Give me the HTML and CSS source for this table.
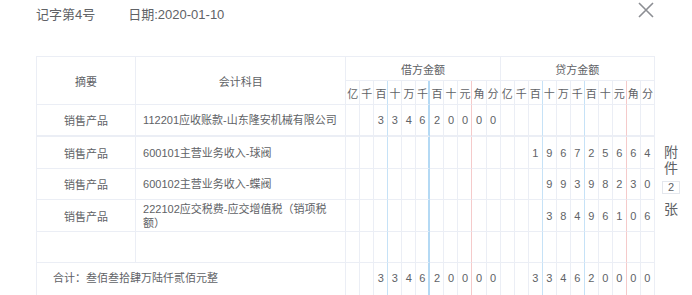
FILE: index.html
```html
<!DOCTYPE html>
<html lang="zh-CN">
<head>
<meta charset="utf-8">
<title>记账凭证</title>
<link rel="stylesheet" href="styles.css">
</head>
<body>
<div class="voucher">
  <div class="head">
    <span class="no">记字第4号</span>
    <span class="date">日期:2020-01-10</span>
  </div>
  <button class="close" aria-label="关闭">
    <svg viewBox="0 0 18 18" width="18" height="18"><path d="M2 2 L16 16 M16 2 L2 16" stroke="#8c8e93" stroke-width="1.6" fill="none"/></svg>
  </button>
  <div class="body">
    <table class="grid">
      <colgroup>
        <col class="c-sum"><col class="c-sub">
        <col class="c-d"><col class="c-d"><col class="c-d"><col class="c-d"><col class="c-d"><col class="c-d"><col class="c-d"><col class="c-d"><col class="c-d"><col class="c-d"><col class="c-d">
        <col class="c-d"><col class="c-d"><col class="c-d"><col class="c-d"><col class="c-d"><col class="c-d"><col class="c-d"><col class="c-d"><col class="c-d"><col class="c-d"><col class="c-d">
      </colgroup>
      <thead>
        <tr class="h1">
          <th rowspan="2" class="lbl">摘要</th>
          <th rowspan="2" class="lbl">会计科目</th>
          <th colspan="11" class="side debit">借方金额</th>
          <th colspan="11" class="side">贷方金额</th>
        </tr>
        <tr class="h2 dig">
          <th>亿</th><th>千</th><th>百</th><th>十</th><th>万</th><th>千</th><th>百</th><th>十</th><th>元</th><th>角</th><th>分</th>
          <th>亿</th><th>千</th><th>百</th><th>十</th><th>万</th><th>千</th><th>百</th><th>十</th><th>元</th><th>角</th><th>分</th>
        </tr>
      </thead>
      <tbody>
        <tr class="r first dig">
          <td class="sum">销售产品</td><td class="sub">112201应收账款-山东隆安机械有限公司</td>
          <td></td><td></td><td>3</td><td>3</td><td>4</td><td>6</td><td>2</td><td>0</td><td>0</td><td>0</td><td>0</td>
          <td></td><td></td><td></td><td></td><td></td><td></td><td></td><td></td><td></td><td></td><td></td>
        </tr>
        <tr class="r r32 dig">
          <td class="sum">销售产品</td><td class="sub">600101主营业务收入-球阀</td>
          <td></td><td></td><td></td><td></td><td></td><td></td><td></td><td></td><td></td><td></td><td></td>
          <td></td><td></td><td>1</td><td>9</td><td>6</td><td>7</td><td>2</td><td>5</td><td>6</td><td>6</td><td>4</td>
        </tr>
        <tr class="r r31 dig">
          <td class="sum">销售产品</td><td class="sub">600102主营业务收入-蝶阀</td>
          <td></td><td></td><td></td><td></td><td></td><td></td><td></td><td></td><td></td><td></td><td></td>
          <td></td><td></td><td></td><td>9</td><td>9</td><td>3</td><td>9</td><td>8</td><td>2</td><td>3</td><td>0</td>
        </tr>
        <tr class="r r32 dig">
          <td class="sum">销售产品</td><td class="sub">222102应交税费-应交增值税（销项税额）</td>
          <td></td><td></td><td></td><td></td><td></td><td></td><td></td><td></td><td></td><td></td><td></td>
          <td></td><td></td><td></td><td>3</td><td>8</td><td>4</td><td>9</td><td>6</td><td>1</td><td>0</td><td>6</td>
        </tr>
        <tr class="r r31 dig">
          <td class="sum"></td><td class="sub"></td>
          <td></td><td></td><td></td><td></td><td></td><td></td><td></td><td></td><td></td><td></td><td></td>
          <td></td><td></td><td></td><td></td><td></td><td></td><td></td><td></td><td></td><td></td><td></td>
        </tr>
        <tr class="r total dig">
          <td colspan="2" class="tot">合计：叁佰叁拾肆万陆仟贰佰元整</td>
          <td></td><td></td><td>3</td><td>3</td><td>4</td><td>6</td><td>2</td><td>0</td><td>0</td><td>0</td><td>0</td>
          <td></td><td></td><td>3</td><td>3</td><td>4</td><td>6</td><td>2</td><td>0</td><td>0</td><td>0</td><td>0</td>
        </tr>
      </tbody>
    </table>
    <div class="attach">
      <span class="ch">附</span>
      <span class="ch">件</span>
      <span class="cnt">2</span>
      <span class="ch">张</span>
    </div>
  </div>
</div>
</body>
</html>
```

FILE: styles.css
```css
html, body {
  margin: 0;
  padding: 0;
  background: #ffffff;
}

body {
  font-family: "Liberation Sans", "Noto Sans CJK SC", sans-serif;
  color: #606266;
}

.voucher {
  position: relative;
  width: 692px;
  height: 295px;
  overflow: hidden;
}

.head {
  display: flex;
  align-items: center;
  gap: 33px;
  height: 26px;
  padding-left: 36px;
  font-size: 13px;
}

.close {
  position: absolute;
  top: 1px;
  left: 637px;
  width: 18px;
  height: 18px;
  padding: 0;
  border: 0;
  background: transparent;
  display: flex;
}

.body {
  display: flex;
  align-items: flex-start;
  margin-top: 30px;
  padding-left: 36px;
}

.grid {
  table-layout: fixed;
  border-collapse: separate;
  border-spacing: 0;
  width: 619px;
  border-top: 1px solid #ebeef5;
  border-left: 1px solid #ebeef5;
  font-size: 11px;
  color: #606266;
}

.c-sum { width: 99px; }
.c-sub { width: 210px; }
.c-d { width: 14px; }

.grid th,
.grid td {
  box-sizing: border-box;
  padding: 0;
  border-right: 1px solid #ebeef5;
  border-bottom: 1px solid #ebeef5;
  font-weight: normal;
  text-align: center;
  vertical-align: middle;
  white-space: nowrap;
  overflow: hidden;
}

.h1 th { height: 24px; }
.h2 th { height: 24px; font-size: 11px; }

.r td { height: 32px; }
.r31 td { height: 31px; }
.first td { height: 32px; border-bottom-width: 2px; }

.grid .total td {
  height: 44px;
  vertical-align: top;
  padding-top: 8px;
  line-height: 14px;
}

.grid td.sub {
  text-align: left;
  padding: 0 3px 0 7px;
  white-space: normal;
  line-height: 14px;
}

.grid .total td.tot {
  text-align: left;
  padding-left: 16px;
}

/* thousand separators and decimal point lines in the digit grid */
.dig > :nth-last-child(20),
.dig > :nth-last-child(9),
.dig > :nth-last-child(6) {
  border-right-color: #c6e2f7;
}
.dig > :nth-last-child(17) {
  border-right: 2px solid #b4d9f4;
}
.dig > :nth-last-child(14),
.dig > :nth-last-child(3) {
  border-right-color: #f5caca;
}

.attach {
  display: flex;
  flex-direction: column;
  align-items: center;
  width: 24px;
  margin-left: 4px;
  margin-top: 88px;
  font-size: 14px;
  line-height: 16px;
  color: #606266;
}

.attach .cnt {
  box-sizing: border-box;
  width: 18px;
  height: 13px;
  margin: 5px 0 7px;
  border: 1px solid #e4e7ed;
  font-size: 11px;
  line-height: 11px;
  text-align: center;
}
```
